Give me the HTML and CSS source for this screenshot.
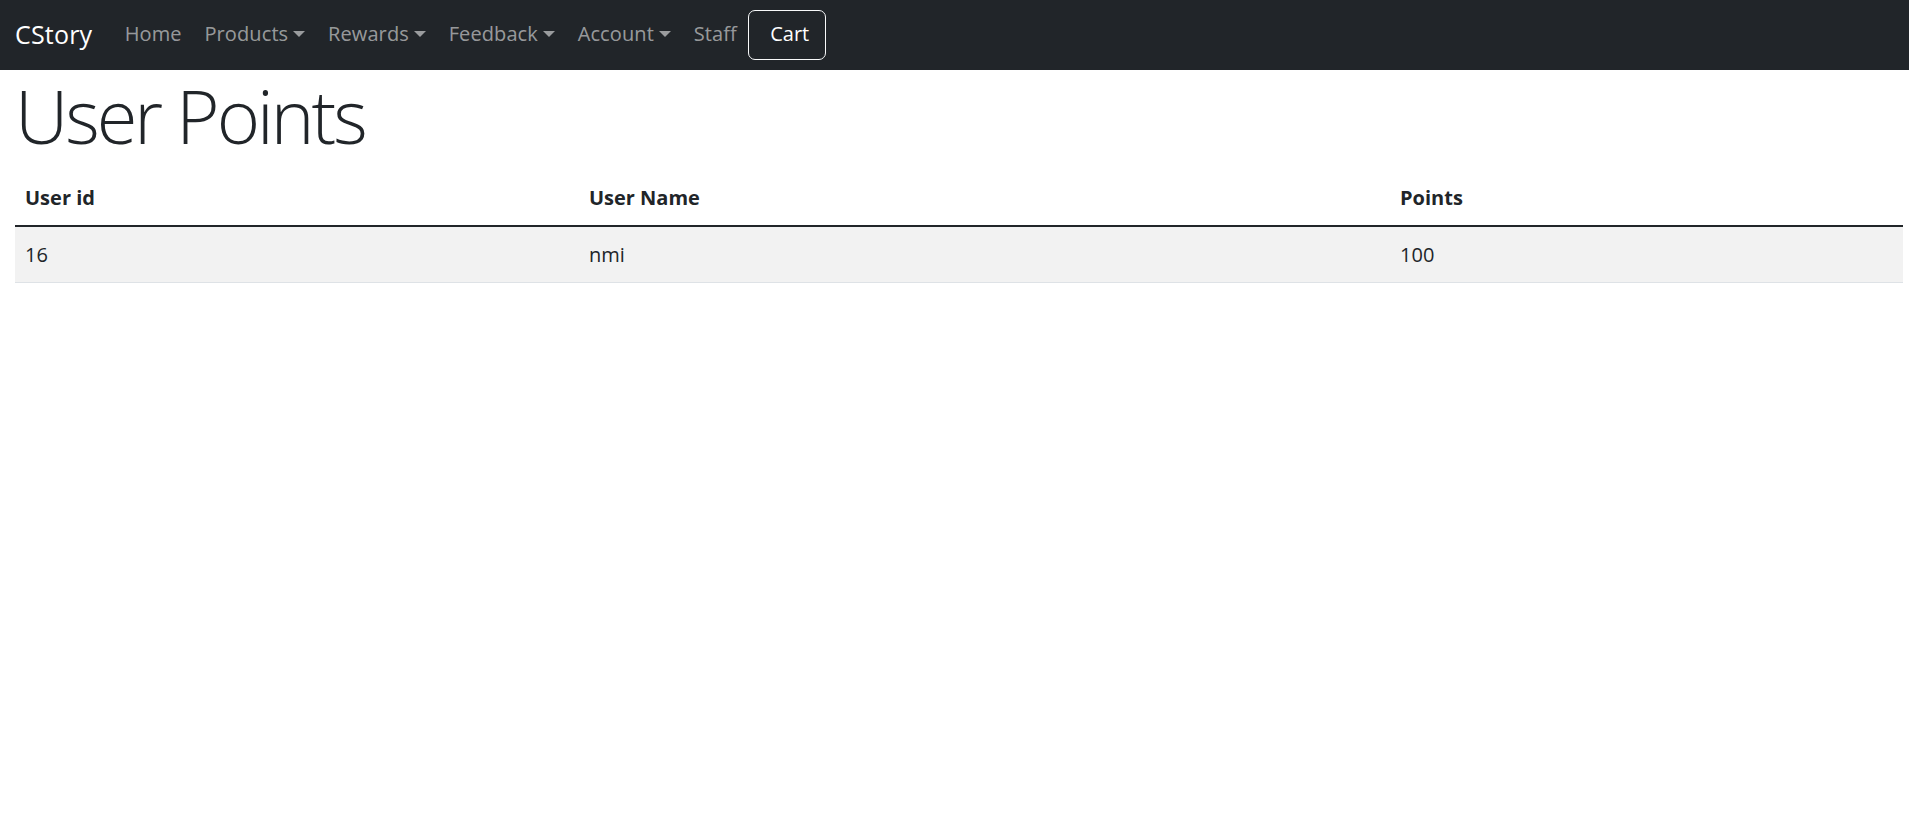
FILE: index.html
```html
<!DOCTYPE html>
<html lang="en">
<head>
<meta charset="utf-8">
<title>User Points - CStory</title>
<link rel="stylesheet" href="styles.css">
</head>
<body>
<nav class="navbar">
  <a class="brand" href="#">CStory</a>
  <ul class="nav">
    <li><a class="nav-link" href="#">Home</a></li>
    <li><a class="nav-link dropdown" href="#">Products</a></li>
    <li><a class="nav-link dropdown" href="#">Rewards</a></li>
    <li><a class="nav-link dropdown" href="#">Feedback</a></li>
    <li><a class="nav-link dropdown" href="#">Account</a></li>
    <li><a class="nav-link" href="#">Staff</a></li>
    <li><a class="cart-btn" href="#">Cart</a></li>
  </ul>
</nav>
<main class="content">
  <h1 class="page-title">User Points</h1>
  <table class="points-table">
    <thead>
      <tr>
        <th class="col-id">User id</th>
        <th class="col-name">User Name</th>
        <th class="col-points">Points</th>
      </tr>
    </thead>
    <tbody>
      <tr class="striped">
        <td>16</td>
        <td>nmi</td>
        <td>100</td>
      </tr>
    </tbody>
  </table>
</main>
</body>
</html>
```
FILE: styles.css
```css
* { box-sizing: border-box; }

body {
  margin: 0;
  font-family: "Open Sans", "Noto Sans", sans-serif;
  font-size: 20px;
  line-height: 1.5;
  color: #212529;
  background: #fff;
}

a { text-decoration: none; }

.navbar {
  display: flex;
  align-items: center;
  height: 70px;
  padding: 10px 15px;
  background: #212529;
}

.brand {
  font-size: 25px;
  line-height: 37.5px;
  padding: 6px 0 7px;
  margin-right: 21px;
  color: #fff;
  letter-spacing: 0.2px;
}

.nav {
  display: flex;
  align-items: center;
  list-style: none;
  margin: 0;
  padding: 0;
}

.nav-link {
  display: block;
  padding: 9px 11.4px 11px;
  line-height: 30px;
  color: rgba(255, 255, 255, 0.55);
  font-size: 20px;
  letter-spacing: 0.1px;
}

.dropdown::after {
  content: "";
  display: inline-block;
  margin-left: 5px;
  vertical-align: 4px;
  border-top: 6px solid;
  border-left: 6px solid transparent;
  border-right: 6px solid transparent;
  border-bottom: 0;
}

.cart-btn {
  display: flex;
  align-items: center;
  justify-content: center;
  width: 78px;
  height: 50px;
  border: 1px solid #f8f9fa;
  border-radius: 7px;
  color: #fff;
  font-size: 20px;
  padding: 0 0 2px 5px;
}

.content {
  padding: 0 6px 0 15px;
}

.page-title {
  margin: 0 0 12.5px;
  padding-top: 2px;
  font-size: 74px;
  font-weight: 300;
  line-height: 1.2;
  letter-spacing: -3px;
}

.points-table {
  width: 100%;
  border-collapse: collapse;
}

.points-table th,
.points-table td {
  text-align: left;
  padding: 10px 10px;
  line-height: 30px;
}

.points-table th {
  font-weight: 700;
  padding-bottom: 11.5px;
  border-bottom: 2.5px solid #212529;
}

.points-table td {
  padding-top: 13px;
  padding-bottom: 12px;
  border-bottom: 1px solid #dee2e6;
}

.striped { background: #f2f2f2; }

.col-id { width: 29.87%; }
.col-name { width: 42.96%; }
```
